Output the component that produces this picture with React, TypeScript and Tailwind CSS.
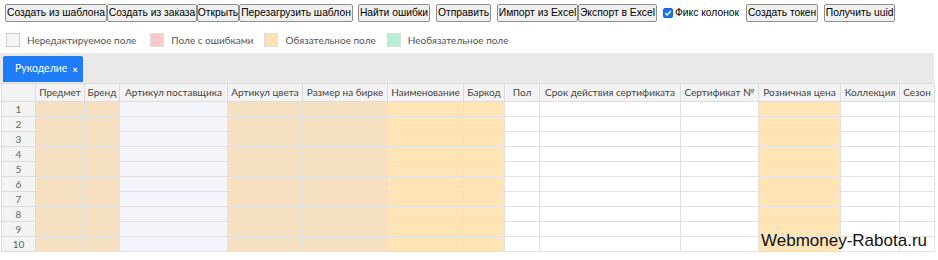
import React from "react";

const cols: { name: string; w: number; bg: string }[] = [
  { name: "Предмет", w: 49, bg: "bg-[#f6e0c2]" },
  { name: "Бренд", w: 35, bg: "bg-[#f6e0c2]" },
  { name: "Артикул поставщика", w: 108, bg: "bg-[#f4f5fb]" },
  { name: "Артикул цвета", w: 75, bg: "bg-[#f6e0c2]" },
  { name: "Размер на бирке", w: 85, bg: "bg-[#f6e0c2]" },
  { name: "Наименование", w: 76, bg: "bg-[#ffe4b5]" },
  { name: "Баркод", w: 41, bg: "bg-[#ffe4b5]" },
  { name: "Пол", w: 35, bg: "bg-white" },
  { name: "Срок действия сертификата", w: 141, bg: "bg-white" },
  { name: "Сертификат №", w: 78, bg: "bg-white" },
  { name: "Розничная цена", w: 82, bg: "bg-[#ffe4b5]" },
  { name: "Коллекция", w: 59, bg: "bg-white" },
  { name: "Сезон", w: 35, bg: "bg-white" },
];

const buttons: { t: string; w: number; ml: string }[] = [
  { t: "Создать из шаблона", w: 102, ml: "ml-[5px]" },
  { t: "Создать из заказа", w: 90, ml: "ml-0" },
  { t: "Открыть", w: 42, ml: "ml-0" },
  { t: "Перезагрузить шаблон", w: 114, ml: "ml-0" },
  { t: "Найти ошибки", w: 72, ml: "ml-[5px]" },
  { t: "Отправить", w: 55, ml: "ml-[6px]" },
  { t: "Импорт из Excel", w: 81, ml: "ml-[6px]" },
  { t: "Экспорт в Excel", w: 79, ml: "ml-0" },
];

function Btn({ t, w, ml }: { t: string; w: number; ml: string }) {
  return (
    <div
      className={`${ml} h-[18px] flex items-center justify-center whitespace-nowrap border border-[#8f8f8f] rounded-[2px] bg-[#efefef] text-[10.3px] text-black leading-none`}
      style={{ width: w }}
    >
      {t}
    </div>
  );
}

export default function App() {
  const gridCols = "34px " + cols.map((c) => c.w + "px").join(" ");
  return (
    <div className="relative w-[938px] h-[260px] bg-white overflow-hidden" style={{ fontFamily: "Lato, 'Noto Sans', sans-serif" }}>
      {/* toolbar */}
      <div className="flex items-center pt-[4px] h-[22px]" style={{ fontFamily: "'Liberation Sans', Arial, sans-serif" }}>
        {buttons.map((b) => (
          <Btn key={b.t} {...b} />
        ))}
        <div className="ml-[6px] flex items-center">
          <svg width="10" height="10" viewBox="0 0 10 10" className="mr-[2px]">
            <rect x="0.5" y="0.5" width="9" height="9" rx="1.5" fill="#1a73e8" stroke="#1a6ad6" />
            <path d="M2.3 5.2 L4.2 7 L7.8 2.9" fill="none" stroke="white" strokeWidth="1.5" />
          </svg>
          <span className="text-[10.3px] text-black whitespace-nowrap">Фикс колонок</span>
        </div>
        <Btn t="Создать токен" w={72} ml="ml-[7px]" />
        <Btn t="Получить uuid" w={71} ml="ml-[6px]" />
      </div>

      {/* legend */}
      <div className="flex items-center h-[14px] mt-[11px] text-[10px] text-[#555]">
        <div className="ml-[6px] w-[14px] h-[14px] border border-[#ccc] bg-[#f4f4fb]" />
        <span className="ml-[7px]">Нередактируемое поле</span>
        <div className="ml-[14px] w-[14px] h-[14px] border border-[#ddd] bg-[#fcc9c9]" />
        <span className="ml-[7px]">Поле с ошибками</span>
        <div className="ml-[10px] w-[14px] h-[14px] border border-[#ddd] bg-[#fde3b4]" />
        <span className="ml-[8px]">Обязательное поле</span>
        <div className="ml-[11px] w-[14px] h-[14px] border border-[#ddd] bg-[#b6f1d6]" />
        <span className="ml-[7px]">Необязательное поле</span>
      </div>

      {/* tab bar */}
      <div className="mt-[6px] w-[934px] h-[30px] bg-[#e9e9e9] flex items-end pl-[3px]">
        <div className="w-[80px] h-[26px] mb-[1px] bg-[#1d7cf6] rounded-t-[2px] flex items-center pl-[12px] text-white text-[10.5px]">
          <span>Рукоделие</span>
          <span className="ml-[5px] text-[9px] font-bold leading-none">×</span>
        </div>
      </div>

      {/* table */}
      <div
        className="ml-[1px] w-[933px] grid border-l border-t border-[#dcdcdc] text-[10px]"
        style={{ gridTemplateColumns: gridCols }}
      >
        <div className="h-[18px] bg-[#f3f3f3] border-r border-b border-[#dcdcdc]" />
        {cols.map((c) => (
          <div
            key={c.name}
            className="h-[18px] bg-[#f3f3f3] border-r border-b border-[#dcdcdc] flex items-center justify-center whitespace-nowrap overflow-hidden text-[#444]"
          >
            {c.name}
          </div>
        ))}
        {Array.from({ length: 10 }).map((_, r) => (
          <React.Fragment key={r}>
            <div className="h-[15px] bg-[#f3f3f3] border-r border-b border-[#dcdcdc] flex items-center justify-center text-[#666] leading-none">
              {r + 1}
            </div>
            {cols.map((c) => (
              <div key={c.name} className={`h-[15px] ${c.bg} border-r border-b border-[#e2e2e2]`} />
            ))}
          </React.Fragment>
        ))}
      </div>

      <div
        className="absolute left-[761px] top-[232px] text-[17px] text-[#111] leading-none"
        style={{ fontFamily: "'Liberation Sans', Arial, sans-serif" }}
      >
        Webmoney-Rabota.ru
      </div>
    </div>
  );
}
